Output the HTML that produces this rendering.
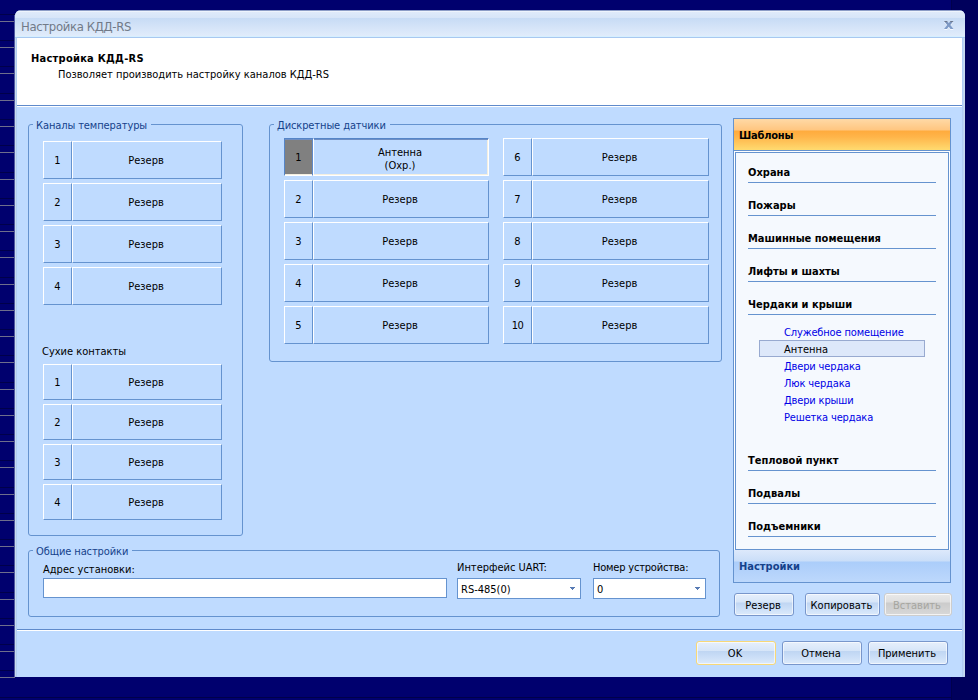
<!DOCTYPE html>
<html lang="ru"><head><meta charset="utf-8"><title>Настройка КДД-RS</title>
<style>
html,body{margin:0;padding:0;}
body{width:978px;height:700px;position:relative;overflow:hidden;background:#00006e;
 font-family:"DejaVu Sans Condensed", "Liberation Sans", sans-serif;font-size:11px;color:#000;}
.abs{position:absolute;}
.t{position:absolute;white-space:nowrap;line-height:13px;}
.b{font-weight:bold;}
#rband{left:952px;top:0;width:26px;height:700px;background:#00005c;}
#dlg{left:15px;top:10px;width:950px;height:667px;background:#bfdbff;border-radius:6px 6px 1px 1px;overflow:hidden;}
#tbar{left:0;top:0;width:950px;height:27px;border-bottom:1px solid #a8c8f0;
 background:linear-gradient(#8c9cc6 0px,#8c9cc6 1px,#eef4fd 1px,#eef4fd 2px,#dfeafa 2px,#d7e5f8 8px,#c7dbf5 8px,#e1ecfb 26px,#d6efff 26px,#d6efff 27px);}
#hdr{left:2px;top:28px;width:945px;height:67px;background:#fff;}
.hl{position:absolute;height:1px;left:2px;width:945px;}
.gb{position:absolute;border:1px solid #6593cf;border-radius:3px;box-sizing:border-box;}
.gbt{position:absolute;background:#bfdbff;color:#15428b;letter-spacing:-0.1px;white-space:nowrap;line-height:13px;padding:0 4px 0 3px;}
.btn{position:absolute;box-sizing:border-box;border-top:1px solid #fff;border-left:1px solid #fff;
 border-right:1px solid #6593cf;border-bottom:1px solid #6593cf;display:flex;align-items:center;justify-content:center;
 text-align:center;line-height:13px;}
.btn.tx{padding-right:2px;}
.btn.sel{border-top:1px solid #5585c8;border-left:1px solid #fff;border-right:1px solid #fff;border-bottom:1px solid #fff;
 box-shadow:inset 0 1px 0 #6f8fc4,inset -1px -1px 0 #f4efe0;padding-top:4px;}
.btn.sel.gray{background:#808080;border-left:1px solid #5585c8;border-right:1px solid #5f8acb;box-shadow:inset 0 1px 0 #6f8fc4,inset 0 -1px 0 #f4efe0;padding-top:0;}
.inp{position:absolute;box-sizing:border-box;border:1px solid #6593cf;background:#fff;line-height:13px;}
.arr{position:absolute;width:5px;height:3px;}
.ob{position:absolute;box-sizing:border-box;border:1px solid #7896cb;border-radius:3px;
 background:linear-gradient(#e6effc 0%,#d6e5f8 40%,#bfd5f2 41%,#c8dcf6 62%,#dceafb 100%);box-shadow:inset 0 0 0 1px rgba(255,255,255,.6);
 display:flex;align-items:center;justify-content:center;line-height:13px;padding-right:2px;}
.ob.sm{padding-top:2px;padding-right:2px;}
.ob.def{border-color:#f8d877;}
.ob.dis{border-color:#cdcdcd;background:linear-gradient(#e9e9e9 0%,#dedede 40%,#cbcbcb 41%,#d8d8d8 100%);color:#a6a6a0;box-shadow:inset 0 0 0 1px rgba(255,255,255,.7);}
#pan{left:733px;top:118px;width:218px;height:465px;box-sizing:border-box;border:1px solid #6593cf;background:#fff;}
#oh{left:0;top:0;width:216px;height:31px;background:linear-gradient(#ffd9a6 0px,#ffc680 11px,#ffab3d 12px,#ffb54a 18px,#ffdb70 31px);}
#inner{left:1px;top:33px;width:214px;height:398px;box-sizing:border-box;border:1px solid #6593cf;background:#f5f9fe;}
#nh{left:0;top:431px;width:216px;height:32px;background:linear-gradient(#dde9fb 0px,#cadef8 11px,#abcdfa 12px,#bdd8fc 32px);}
.cat{position:absolute;left:748px;width:188px;height:1px;background:#6593cf;}
.lnk{color:#0000e6;letter-spacing:-0.15px;}
</style></head>
<body>
<div class="abs" id="rband"></div>
<div class="abs" style="left:0;top:21px;width:15px;height:1px;background:#6e6e8c"></div>
<div class="abs" style="left:0;top:14px;width:15px;height:1px;background:#00004a"></div>
<div class="abs" style="left:0;top:47px;width:15px;height:1px;background:#6e6e8c"></div>
<div class="abs" style="left:0;top:40px;width:15px;height:1px;background:#00004a"></div>
<div class="abs" style="left:0;top:73px;width:15px;height:1px;background:#6e6e8c"></div>
<div class="abs" style="left:0;top:66px;width:15px;height:1px;background:#00004a"></div>
<div class="abs" style="left:0;top:100px;width:15px;height:1px;background:#6e6e8c"></div>
<div class="abs" style="left:0;top:93px;width:15px;height:1px;background:#00004a"></div>
<div class="abs" style="left:0;top:126px;width:15px;height:1px;background:#6e6e8c"></div>
<div class="abs" style="left:0;top:119px;width:15px;height:1px;background:#00004a"></div>
<div class="abs" style="left:0;top:152px;width:15px;height:1px;background:#6e6e8c"></div>
<div class="abs" style="left:0;top:145px;width:15px;height:1px;background:#00004a"></div>
<div class="abs" style="left:0;top:179px;width:15px;height:1px;background:#6e6e8c"></div>
<div class="abs" style="left:0;top:172px;width:15px;height:1px;background:#00004a"></div>
<div class="abs" style="left:0;top:205px;width:15px;height:1px;background:#6e6e8c"></div>
<div class="abs" style="left:0;top:198px;width:15px;height:1px;background:#00004a"></div>
<div class="abs" style="left:0;top:231px;width:15px;height:1px;background:#6e6e8c"></div>
<div class="abs" style="left:0;top:224px;width:15px;height:1px;background:#00004a"></div>
<div class="abs" style="left:0;top:257px;width:15px;height:1px;background:#6e6e8c"></div>
<div class="abs" style="left:0;top:250px;width:15px;height:1px;background:#00004a"></div>
<div class="abs" style="left:0;top:284px;width:15px;height:1px;background:#6e6e8c"></div>
<div class="abs" style="left:0;top:277px;width:15px;height:1px;background:#00004a"></div>
<div class="abs" style="left:0;top:310px;width:15px;height:1px;background:#6e6e8c"></div>
<div class="abs" style="left:0;top:303px;width:15px;height:1px;background:#00004a"></div>
<div class="abs" style="left:0;top:336px;width:15px;height:1px;background:#6e6e8c"></div>
<div class="abs" style="left:0;top:329px;width:15px;height:1px;background:#00004a"></div>
<div class="abs" style="left:0;top:362px;width:15px;height:1px;background:#6e6e8c"></div>
<div class="abs" style="left:0;top:355px;width:15px;height:1px;background:#00004a"></div>
<div class="abs" style="left:0;top:389px;width:15px;height:1px;background:#6e6e8c"></div>
<div class="abs" style="left:0;top:382px;width:15px;height:1px;background:#00004a"></div>
<div class="abs" style="left:0;top:415px;width:15px;height:1px;background:#6e6e8c"></div>
<div class="abs" style="left:0;top:408px;width:15px;height:1px;background:#00004a"></div>
<div class="abs" style="left:0;top:441px;width:15px;height:1px;background:#6e6e8c"></div>
<div class="abs" style="left:0;top:434px;width:15px;height:1px;background:#00004a"></div>
<div class="abs" style="left:0;top:467px;width:15px;height:1px;background:#6e6e8c"></div>
<div class="abs" style="left:0;top:460px;width:15px;height:1px;background:#00004a"></div>
<div class="abs" style="left:0;top:494px;width:15px;height:1px;background:#6e6e8c"></div>
<div class="abs" style="left:0;top:487px;width:15px;height:1px;background:#00004a"></div>
<div class="abs" style="left:0;top:520px;width:15px;height:1px;background:#6e6e8c"></div>
<div class="abs" style="left:0;top:513px;width:15px;height:1px;background:#00004a"></div>
<div class="abs" style="left:0;top:546px;width:15px;height:1px;background:#6e6e8c"></div>
<div class="abs" style="left:0;top:539px;width:15px;height:1px;background:#00004a"></div>
<div class="abs" style="left:0;top:572px;width:15px;height:1px;background:#6e6e8c"></div>
<div class="abs" style="left:0;top:565px;width:15px;height:1px;background:#00004a"></div>
<div class="abs" style="left:0;top:599px;width:15px;height:1px;background:#6e6e8c"></div>
<div class="abs" style="left:0;top:592px;width:15px;height:1px;background:#00004a"></div>
<div class="abs" style="left:0;top:625px;width:15px;height:1px;background:#6e6e8c"></div>
<div class="abs" style="left:0;top:618px;width:15px;height:1px;background:#00004a"></div>
<div class="abs" style="left:0;top:651px;width:15px;height:1px;background:#6e6e8c"></div>
<div class="abs" style="left:0;top:644px;width:15px;height:1px;background:#00004a"></div>
<div class="abs" style="left:0;top:677px;width:15px;height:1px;background:#6e6e8c"></div>
<div class="abs" style="left:0;top:670px;width:15px;height:1px;background:#00004a"></div>
<div class="abs" style="left:0;top:697px;width:952px;height:1px;background:#00004a"></div>
<div class="abs" style="left:951px;top:0;width:1px;height:700px;background:#00004c"></div>
<div class="abs" style="left:14px;top:15px;width:1px;height:662px;background:#4f58a0"></div>
<div class="abs" id="dlg">
<div class="abs" id="tbar"></div>
<div class="abs" style="left:0;top:28px;width:2px;height:639px;background:linear-gradient(90deg,#c8daee 1px,#b2cdf2 1px)"></div>
<div class="abs" style="left:947px;top:28px;width:3px;height:639px;background:linear-gradient(90deg,#b2cdf2 1px,#bcd5f4 1px,#bcd5f4 2px,#c8daee 2px)"></div>
<div class="abs" id="hdr"></div>
<div class="hl" style="top:95px;background:#5f8acb"></div>
<div class="hl" style="top:96px;background:#fff"></div>
<div class="hl" style="top:619px;background:#5f8acb"></div>
<div class="hl" style="top:620px;background:#fff"></div>
</div>
<div class="t" style="left:21px;top:19px;font-size:13px;line-height:15px;letter-spacing:-0.35px;color:#717a88">Настройка КДД-RS</div>
<svg class="abs" style="left:944px;top:21px" width="10" height="10" viewBox="0 0 10 10"><defs><linearGradient id="xg" x1="0" y1="0" x2="0" y2="1"><stop offset="0" stop-color="#646a76"/><stop offset="0.2" stop-color="#7b95bf"/><stop offset="1" stop-color="#7f9dcb"/></linearGradient></defs><path d="M0 1 L3 1 L4.75 3.3 L6.5 1 L9.5 1 L6.3 5 L9.5 9 L6.5 9 L4.75 6.7 L3 9 L0 9 L3.2 5 Z" fill="#f4f8fe"/><path d="M0 0 L3 0 L4.75 2.3 L6.5 0 L9.5 0 L6.3 4 L9.5 8 L6.5 8 L4.75 5.7 L3 8 L0 8 L3.2 4 Z" fill="url(#xg)"/></svg>
<div class="t b" style="left:31px;top:52px;letter-spacing:0.25px">Настройка КДД-RS</div>
<div class="t" style="left:58px;top:68px">Позволяет производить настройку каналов КДД-RS</div>
<div class="gb" style="left:28px;top:124px;width:215px;height:412px"></div>
<div class="gbt" style="left:33px;top:119px">Каналы температуры</div>
<div class="gb" style="left:269px;top:124px;width:453px;height:238px"></div>
<div class="gbt" style="left:274px;top:119px">Дискретные датчики</div>
<div class="gb" style="left:28px;top:550px;width:692px;height:67px"></div>
<div class="gbt" style="left:33px;top:545px">Общие настройки</div>
<div class="btn" style="left:43px;top:141px;width:29px;height:38px">1</div>
<div class="btn tx" style="left:72px;top:141px;width:150px;height:38px">Резерв</div>
<div class="btn" style="left:43px;top:183px;width:29px;height:38px">2</div>
<div class="btn tx" style="left:72px;top:183px;width:150px;height:38px">Резерв</div>
<div class="btn" style="left:43px;top:225px;width:29px;height:38px">3</div>
<div class="btn tx" style="left:72px;top:225px;width:150px;height:38px">Резерв</div>
<div class="btn" style="left:43px;top:267px;width:29px;height:38px">4</div>
<div class="btn tx" style="left:72px;top:267px;width:150px;height:38px">Резерв</div>
<div class="t" style="left:42px;top:345px">Сухие контакты</div>
<div class="btn" style="left:43px;top:364px;width:29px;height:36px">1</div>
<div class="btn tx" style="left:72px;top:364px;width:150px;height:36px">Резерв</div>
<div class="btn" style="left:43px;top:404px;width:29px;height:36px">2</div>
<div class="btn tx" style="left:72px;top:404px;width:150px;height:36px">Резерв</div>
<div class="btn" style="left:43px;top:444px;width:29px;height:36px">3</div>
<div class="btn tx" style="left:72px;top:444px;width:150px;height:36px">Резерв</div>
<div class="btn" style="left:43px;top:484px;width:29px;height:36px">4</div>
<div class="btn tx" style="left:72px;top:484px;width:150px;height:36px">Резерв</div>
<div class="btn sel gray" style="left:284px;top:138px;width:29px;height:38px">1</div>
<div class="btn sel tx" style="left:313px;top:138px;width:176px;height:38px">Антенна<br>(Охр.)</div>
<div class="btn" style="left:503px;top:138px;width:29px;height:38px">6</div>
<div class="btn tx" style="left:532px;top:138px;width:177px;height:38px">Резерв</div>
<div class="btn" style="left:284px;top:180px;width:29px;height:38px">2</div>
<div class="btn tx" style="left:313px;top:180px;width:176px;height:38px">Резерв</div>
<div class="btn" style="left:503px;top:180px;width:29px;height:38px">7</div>
<div class="btn tx" style="left:532px;top:180px;width:177px;height:38px">Резерв</div>
<div class="btn" style="left:284px;top:222px;width:29px;height:38px">3</div>
<div class="btn tx" style="left:313px;top:222px;width:176px;height:38px">Резерв</div>
<div class="btn" style="left:503px;top:222px;width:29px;height:38px">8</div>
<div class="btn tx" style="left:532px;top:222px;width:177px;height:38px">Резерв</div>
<div class="btn" style="left:284px;top:264px;width:29px;height:38px">4</div>
<div class="btn tx" style="left:313px;top:264px;width:176px;height:38px">Резерв</div>
<div class="btn" style="left:503px;top:264px;width:29px;height:38px">9</div>
<div class="btn tx" style="left:532px;top:264px;width:177px;height:38px">Резерв</div>
<div class="btn" style="left:284px;top:306px;width:29px;height:38px">5</div>
<div class="btn tx" style="left:313px;top:306px;width:176px;height:38px">Резерв</div>
<div class="btn" style="left:503px;top:306px;width:29px;height:38px;letter-spacing:-0.6px">10</div>
<div class="btn tx" style="left:532px;top:306px;width:177px;height:38px">Резерв</div>
<div class="t" style="left:43px;top:563px">Адрес установки:</div>
<div class="inp" style="left:43px;top:578px;width:404px;height:20px"></div>
<div class="t" style="left:457px;top:561px">Интерфейс UART:</div>
<div class="inp" style="left:457px;top:578px;width:124px;height:21px;padding:4px 0 0 3px">RS-485(0)</div><svg class="arr" style="left:570px;top:587px" viewBox="0 0 5 3" shape-rendering="crispEdges"><path d="M0 0h5v1h-1v1h-1v1h-1v-1h-1v-1h-1z" fill="#587bb4"/></svg>
<div class="t" style="left:593px;top:561px;letter-spacing:-0.2px">Номер устройства:</div>
<div class="inp" style="left:593px;top:578px;width:113px;height:21px;padding:4px 0 0 3px">0</div><svg class="arr" style="left:695px;top:587px" viewBox="0 0 5 3" shape-rendering="crispEdges"><path d="M0 0h5v1h-1v1h-1v1h-1v-1h-1v-1h-1z" fill="#587bb4"/></svg>
<div class="abs" id="pan"><div class="abs" id="oh"></div><div class="abs" style="left:0;top:31px;width:216px;height:1px;background:#6593cf"></div><div class="abs" id="inner"></div><div class="abs" id="nh"></div></div>
<div class="t b" style="left:739px;top:129px;letter-spacing:-0.2px">Шаблоны</div>
<div class="t b" style="left:748px;top:166px">Охрана</div><div class="cat" style="top:182px"></div>
<div class="t b" style="left:748px;top:199px">Пожары</div><div class="cat" style="top:215px"></div>
<div class="t b" style="left:748px;top:232px">Машинные помещения</div><div class="cat" style="top:248px"></div>
<div class="t b" style="left:748px;top:265px">Лифты и шахты</div><div class="cat" style="top:281px"></div>
<div class="t b" style="left:748px;top:298px">Чердаки и крыши</div><div class="cat" style="top:314px"></div>
<div class="t b" style="left:748px;top:454px">Тепловой пункт</div><div class="cat" style="top:470px"></div>
<div class="t b" style="left:748px;top:487px">Подвалы</div><div class="cat" style="top:503px"></div>
<div class="t b" style="left:748px;top:520px">Подъемники</div><div class="cat" style="top:536px"></div>
<div class="abs" style="left:759px;top:340px;width:166px;height:17px;box-sizing:border-box;border:1px solid #98aad0;background:#dde8fa"></div>
<div class="t lnk" style="left:784px;top:326px">Служебное помещение</div>
<div class="t" style="left:784px;top:343px">Антенна</div>
<div class="t lnk" style="left:784px;top:360px">Двери чердака</div>
<div class="t lnk" style="left:784px;top:377px">Люк чердака</div>
<div class="t lnk" style="left:784px;top:394px">Двери крыши</div>
<div class="t lnk" style="left:784px;top:411px">Решетка чердака</div>
<div class="t b" style="left:739px;top:560px;color:#15428b">Настройки</div>
<div class="ob sm" style="left:734px;top:593px;width:60px;height:23px">Резерв</div>
<div class="ob sm" style="left:805px;top:593px;width:75px;height:23px">Копировать</div>
<div class="ob dis sm" style="left:884px;top:593px;width:68px;height:23px">Вставить</div>
<div class="ob def" style="left:696px;top:641px;width:80px;height:24px">OK</div>
<div class="ob " style="left:782px;top:641px;width:80px;height:24px">Отмена</div>
<div class="ob " style="left:868px;top:641px;width:80px;height:24px">Применить</div>
</body></html>
